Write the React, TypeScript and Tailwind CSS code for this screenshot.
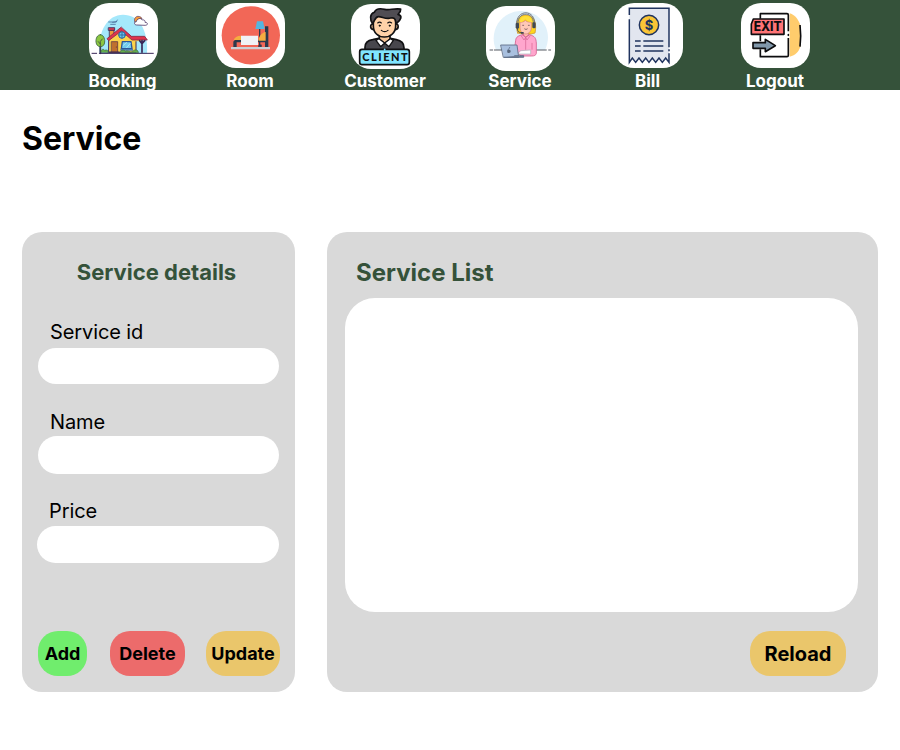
import type { ReactNode } from "react";

function HouseIcon() {
  return (
    <svg viewBox="26 9 207 195" className="h-[65px] w-[69px]" strokeLinecap="round" strokeLinejoin="round">
      <path d="M57 161C52 92 82 44 128 44s76 42 72 117z" fill="#a5e8fb" />
      <path d="M85 66h22l4-6M91 73h14M97 67l12-2" fill="none" stroke="#4b6f9c" strokeWidth="2.5" />
      <path d="M168 75c-7 0-8-9 0-11 1-9 14-12 18-4 7-2 9 4 8 7 10 0 9 9 2 9z" fill="#fff" stroke="#54406f" strokeWidth="2.5" />
      <path d="M163 65c-3-9 3-16 10-16 7 0 12 4 12 8-8-4-15 0-17 7z" fill="#f79a3c" stroke="#54406f" strokeWidth="2" />
      <path d="M60 110v50" stroke="#3c2f56" strokeWidth="5" />
      <path d="M60 104c-9 0-14 11-13 22 1 9 6 14 13 14s13-5 13-14c1-11-4-22-13-22z" fill="#8bc641" stroke="#3d6842" strokeWidth="2.5" />
      <path d="M60 154v-30l6-7m-6 15-6-7" fill="none" stroke="#3d4c45" strokeWidth="2.5" />
      <path d="M88 90h13v20l-13 8z" fill="#ef9a37" stroke="#3a2857" strokeWidth="2.5" />
      <path d="M85 83h18v8H85z" fill="#d83a50" stroke="#3a2857" strokeWidth="2.5" />
      <path d="M86 118 124 87l43 34v37H86z" fill="#fbd34b" stroke="#3a2857" strokeWidth="3" />
      <path d="M143 110h36v11h6v3h-24z" fill="#fbd34b" />
      <path d="M122 82 80 116l5 6 38-29 32 27h46l-8-11h-39z" fill="#df344d" stroke="#862d4a" strokeWidth="2.5" />
      <circle cx="125" cy="105" r="10" fill="#69c8ee" stroke="#2c609a" strokeWidth="3" />
      <path d="M116 105h18M125 96v18" stroke="#2c609a" strokeWidth="2.5" />
      <path d="M94 125h18v32H94z" fill="#bf702f" stroke="#643b46" strokeWidth="2.5" />
      <circle cx="108" cy="141" r="1.5" fill="#47223e" />
      <path d="M126 125h26l3 21h-32z" fill="#73ccee" stroke="#2d579a" strokeWidth="4" />
      <path d="M128 137 139 127M139 143l11-13" stroke="#c8f1fa" strokeWidth="2" />
      <path d="M120 147h38v5h-38z" fill="#467cb3" />
      <path d="M185 122v35M178 122l7 9 8-9" fill="none" stroke="#3a2857" strokeWidth="5" />
      <path d="M62 157c-1-9 7-12 11-6 8-3 13 1 10 7zM119 158c2-8 10-11 16-4 7-5 12 4 20 1l8-5c8-2 11 3 11 8z" fill="#63ad4b" stroke="#3e6852" strokeWidth="2" />
      <path d="M35 160h14M57 160h162M86 156h31" stroke="#3a2857" strokeWidth="3" />
    </svg>
  );
}

function BedIcon() {
  return (
    <svg viewBox="33 9 207 195" className="h-[65px] w-[69px]">
      <circle cx="137.5" cy="106" r="87.5" fill="#f26757" />
      <path d="M162 87h4v49h-4z" fill="#2b3a4d" />
      <path d="M156 64h18l5 23h-28z" fill="#56b5df" />
      <path d="M180 79h10v62h-10v-14H95v14H85v-14c0-5 4-8 10-8h85z" fill="#2b3a4d" />
      <path d="M159 140c0-5 4-7 11-6v7z" fill="#2b3a4d" />
      <path d="M86 120c3-8 10-13 22-13v13zM160 122c2-14 11-24 22-26v26z" fill="#f5ad40" />
      <path d="M108 107h51v28h-51z" fill="#f0f3f6" />
      <path d="M78 141h117v7H78z" fill="#ccd0d5" />
    </svg>
  );
}

function ClientIcon() {
  return (
    <svg viewBox="33 11 207 195" className="h-[65px] w-[69px]" stroke="#111113" strokeWidth="5" strokeLinecap="round" strokeLinejoin="round">
      <path d="M75 151v-10c0-14 10-21 23-23l18-4 18 15 17-15 18 4c14 3 23 10 23 24v9z" fill="#48474d" />
      <path d="M118 102v15l16 12 16-12v-15z" fill="#f5c496" />
      <path d="m117 115 17 13-12 11-14-19zM151 115l-17 13 13 11 13-19z" fill="#fff" strokeWidth="4" />
      <path d="M101 71c-10-3-14 15 0 17M165 71c12-3 13 15 1 17" fill="#f5c496" />
      <path d="M100 55v22c0 20 14 33 33 33s34-13 34-33V55l-9-9h-47z" fill="#ffd2a8" />
      <path d="M98 70c-9-12-9-29 5-34 5-12 19-12 31-9 17 4 24-4 48-1 1 8-4 12-8 16 14 4 10 16-5 28l-4-13c-4-8-10-4-19-3-13 1-20-5-31-5-8 0-9 7-17 21z" fill="#504d53" />
      <circle cx="119" cy="76" r="2" fill="#111113" strokeWidth="2" />
      <circle cx="149" cy="76" r="2" fill="#111113" strokeWidth="2" />
      <path d="M113 68q6-5 11 0M143 68q6-5 12 0M124 90q10 8 20 0" fill="none" strokeWidth="3.5" />
      <rect x="59" y="147" width="149" height="46" rx="7" fill="#80e5ff" />
      <path d="M134 147v2" stroke="#80e5ff" />
      <text x="67" y="182" fontFamily="Lato, sans-serif" fontSize="33" fontWeight="900" fill="#111113" stroke="none" textLength="136">CLIENT</text>
    </svg>
  );
}

function SupportIcon() {
  return (
    <svg viewBox="33 17 207 195" className="h-[65px] w-[69px]" strokeLinecap="round" strokeLinejoin="round">
      <path d="M63 149c-24-57 16-117 76-117s98 61 71 117z" fill="#e1f1fa" />
      <path d="M45 149h8m5 0h22M185 149h29m7 0h6" stroke="#575b62" strokeWidth="3" />
      <path d="M128 98c-8-22-5-54 23-54 31 0 34 30 29 54-12 5-38 5-52 0z" fill="#ffd51e" stroke="#d09c3c" strokeWidth="2.5" />
      <path d="M125 74c-4-49 58-49 54-1M129 69c-1-37 48-37 46 0" fill="none" stroke="#717984" strokeWidth="3" />
      <path d="M145 94v15c2 8 12 8 15 0V94z" fill="#ffbdad" stroke="#c27a75" strokeWidth="2" />
      <path d="M135 65v17c1 25 33 25 34 0V65c-13 2-18-5-18-5s-6 8-16 5z" fill="#ffc8b7" stroke="#d17b79" strokeWidth="2" />
      <path d="M134 65c6 1 13-3 17-10 4 7 12 10 21 11-4-15-10-18-20-18-11 0-16 7-18 17z" fill="#ffdf3a" />
      <path d="M143 75h3m14 0h3M149 86q4 4 8 0" fill="none" stroke="#75575b" strokeWidth="2.5" />
      <rect x="122" y="67" width="10" height="18" rx="4" fill="#3f4855" />
      <rect x="172" y="66" width="10" height="18" rx="4" fill="#3f4855" />
      <path d="M128 84v6c1 6 8 7 13 7" fill="none" stroke="#3f4855" strokeWidth="3" />
      <path d="M138 95h8v5h-8z" fill="#3f4855" />
      <path d="m144 103 8 7 11-7c17 4 20 11 21 25v31c-1 6-6 8-14 8h-31l-21-16 4-31c1-10 8-15 22-17z" fill="#ffa6cd" stroke="#d4608f" strokeWidth="2.5" />
      <path d="m143 104 9 7-5 8-8-12M163 104l-11 7 4 8 9-12M152 112v35M171 129v18" fill="none" stroke="#d4608f" strokeWidth="2" />
      <path d="m138 151 29-2v12h-39z" fill="#fff" stroke="#abb0b8" strokeWidth="2" />
      <path d="M78 134h48l5 37H86z" fill="#a9c0df" stroke="#596983" strokeWidth="2.5" />
      <path d="M88 171h58v-5h-27" fill="#738099" stroke="#596983" strokeWidth="2.5" />
      <path d="M101 147c-6-1-6 12 0 11 7 1 8-9 2-10z" fill="#59677d" />
      <path d="m102 145 2-4" stroke="#59677d" strokeWidth="2" />
    </svg>
  );
}

function BillIcon() {
  return (
    <svg viewBox="31 9 207 195" className="h-[65px] w-[69px]" fill="none" stroke="#20345f" strokeWidth="4.5">
      <path d="M77 25h119v162l-10-13-10 13-10-13-10 13-10-13-10 13-10-13-10 13-10-13-10 13-10-13-9 13z" fill="#e2e6ef" stroke="none" />
      <path d="M77 45V25h119v117M196 160v27l-10-13-10 13-10-13-10 13-10-13-10 13-10-13-10 13-10-13-10 13-10-13-9 13V58M196 148v6" />
      <path d="M94 123h17m8 0h60M94 138h17m8 0h60M94 153h17m8 0h60" />
      <circle cx="136" cy="75" r="29" fill="#fac536" />
      <text x="136" y="89" textAnchor="middle" fontFamily="Inter, sans-serif" fontSize="39" fontWeight="700" fill="#20345f" stroke="none">$</text>
    </svg>
  );
}

function ExitIcon() {
  return (
    <svg viewBox="33 9 207 195" className="h-[65px] w-[69px]" stroke="#0d0d0f" strokeWidth="5" strokeLinejoin="round">
      <path d="M179 40c18 6 27 20 32 36v64c-5 15-14 25-32 30z" fill="#ffcc6c" stroke="none" />
      <path d="M210 75q4 32 0 65" fill="none" />
      <path d="M91 56V41h80q4 0 4 4v49M175 114v52q0 4-4 4H91v-22M91 124v-18" fill="none" />
      <path d="M175 104v2" strokeLinecap="round" />
      <path d="M70 57h92v46H64V72z" fill="#ff7476" />
      <path d="M69 128h37v-10l30 19-30 18v-10H69z" fill="#8097aa" />
      <text x="71" y="93" fontFamily="Inter, sans-serif" fontSize="39" fontWeight="800" textLength="84" lengthAdjust="spacingAndGlyphs" fill="#0d0d0f" stroke="none">EXIT</text>
    </svg>
  );
}

function NavItem({ label, className, children }: { label: string; className: string; children: ReactNode }) {
  return (
    <a className={`flex w-[69px] shrink-0 flex-col items-center justify-between ${className}`}>
      <span className="block h-[65px] w-[69px] shrink-0 overflow-hidden rounded-[20px] bg-white">{children}</span>
      <span className="-mb-px pr-px text-[17px] font-bold leading-[20px] whitespace-nowrap text-white">{label}</span>
    </a>
  );
}

export default function App() {
  return (
    <div className="h-[750px] w-[900px] overflow-hidden bg-white font-['Inter',sans-serif] text-black">
      <header className="flex h-[90px] overflow-hidden bg-[#35523a] pl-[88.5px]">
        <NavItem label="Booking" className="pt-[3px]"><HouseIcon /></NavItem>
        <NavItem label="Room" className="ml-[58.5px] pt-[3px]"><BedIcon /></NavItem>
        <NavItem label="Customer" className="ml-[66px] pt-1"><ClientIcon /></NavItem>
        <NavItem label="Service" className="ml-[66px] pt-1.5"><SupportIcon /></NavItem>
        <NavItem label="Bill" className="ml-[58.5px] pt-[3px]"><BillIcon /></NavItem>
        <NavItem label="Logout" className="ml-[58.5px] pt-[3px]"><ExitIcon /></NavItem>
      </header>
      <main className="px-[22px] pt-[29px]">
        <h1 className="h-[113px] text-[32px] font-bold leading-[40px]">Service</h1>
        <div className="flex h-[460px] gap-8">
          <section className="flex w-[273px] flex-col rounded-[20px] bg-[#d9d9d9] pt-[26px] pr-[15px] pb-4 pl-4">
            <h2 className="pr-[5px] text-center text-[22px] font-bold leading-[28px] text-[#35523a]">Service details</h2>
            <label className="mt-[34px] flex flex-col text-[20px] leading-[24px] tracking-[-0.1px]">
              <span className="pl-3">Service id</span>
              <input className="mt-[4px] h-9 w-[241px] rounded-[20px] bg-white px-4 outline-none" />
            </label>
            <label className="mt-[26px] flex flex-col text-[20px] leading-[24px] tracking-[-0.1px]">
              <span className="pl-3">Name</span>
              <input className="mt-[2px] h-[38px] w-[241px] rounded-[20px] bg-white px-4 outline-none" />
            </label>
            <label className="-ml-px mt-[25px] flex flex-col text-[20px] leading-[24px] tracking-[-0.1px]">
              <span className="pl-3">Price</span>
              <input className="mt-[3px] h-[37px] w-[242px] rounded-[20px] bg-white px-4 outline-none" />
            </label>
            <div className="mt-auto flex h-[45px] text-[18px] font-bold">
              <button className="w-[49px] rounded-[20px] bg-[#70ed6d]">Add</button>
              <button className="ml-[23px] w-[75px] rounded-[20px] bg-[#ec6b6b]">Delete</button>
              <button className="ml-[21px] w-[74px] shrink-0 rounded-[20px] bg-[#eac66b]">Update</button>
            </div>
          </section>
          <section className="flex w-[551px] flex-col rounded-[20px] bg-[#d9d9d9] pt-[27px] pr-5 pb-4 pl-[18px]">
            <h2 className="pl-[11px] text-[24px] font-bold leading-[28px] text-[#35523a]">Service List</h2>
            <div className="mt-[11px] h-[314px] rounded-[30px] bg-white" />
            <button className="mt-auto mr-3 h-[45px] w-[96px] self-end rounded-[20px] bg-[#eac66b] text-[20px] font-bold">Reload</button>
          </section>
        </div>
      </main>
    </div>
  );
}
